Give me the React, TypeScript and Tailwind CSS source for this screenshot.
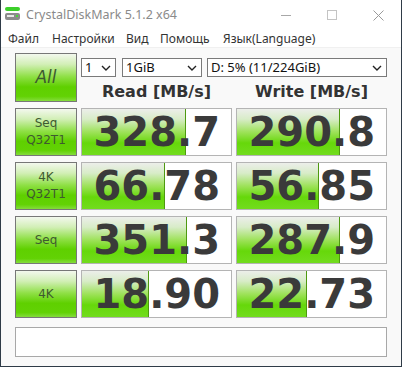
const rows = [
  { l1: "Seq", l2: "Q32T1", r: "328.7", rw: 104, w: "290.8", ww: 103 },
  { l1: "4K", l2: "Q32T1", r: "66.78", rw: 83, w: "56.85", ww: 82 },
  { l1: "Seq", l2: "", r: "351.3", rw: 105, w: "287.9", ww: 103 },
  { l1: "4K", l2: "", r: "18.90", rw: 67, w: "22.73", ww: 70 },
];

const labelBg =
  "bg-[linear-gradient(to_bottom,#f3f8ee_0%,#d2efb6_22%,#8fe046_48%,#5fd000_70%,#62d204_90%,#84dc3c_100%)]";

function Chevron() {
  return (
    <svg width="10" height="6" viewBox="0 0 10 6" className="shrink-0">
      <path d="M1 1l4 4 4-4" fill="none" stroke="#222" strokeWidth="1.4" />
    </svg>
  );
}

function Combo({ text, w }: { text: string; w: string }) {
  return (
    <div className={`${w} h-[19px] bg-white border border-[#7a7a7a] flex items-center justify-between pl-[3px] pr-[4px] text-[13px] text-[#111] leading-none`}>
      <span>{text}</span>
      <Chevron />
    </div>
  );
}

function Value({ v, fill }: { v: string; fill: number }) {
  return (
    <div className="relative w-[151px] h-[48px] bg-white border border-[#b4b4b4] flex items-center justify-end pr-[11px]">
      <div
        className="absolute left-0 top-0 bottom-0 border-r border-[#4e9a10] bg-[linear-gradient(to_bottom,#eceeea_0%,#d8ecc8_22%,#9ee25a_50%,#66d80a_74%,#72dc1e_100%)]"
        style={{ width: fill }}
      />
      <span className="relative font-['DejaVu_Sans',sans-serif] font-bold text-[40px] leading-none text-[#3a3a3a]">
        {v}
      </span>
    </div>
  );
}

function Label({ l1, l2 }: { l1: string; l2: string }) {
  return (
    <div className={`w-[62px] h-[48px] border border-[#777] ${labelBg} flex flex-col items-center justify-center text-[12px] leading-[17px] text-[#3e5a30] font-['DejaVu_Sans',sans-serif]`}>
      <span>{l1}</span>
      {l2 && <span>{l2}</span>}
    </div>
  );
}

export default function App() {
  return (
    <div className="w-[402px] h-[367px] flex flex-col bg-[#f9f9f9] border-x border-b border-[#2f3b47] font-['Noto_Sans',sans-serif] overflow-hidden">
      <div className="h-[30px] bg-white flex items-center relative">
        <svg width="17" height="16" viewBox="0 0 17 16" className="ml-[3px] mt-[-2px]">
          <rect x="1" y="1" width="15" height="4" rx="2" fill="#3ccf2a" />
          <rect x="1" y="7" width="15" height="7" rx="2" fill="#8c8c8c" />
          <rect x="3" y="9" width="7" height="2" fill="#e8e8e8" />
          <rect x="12" y="9" width="2" height="2" fill="#4ad43a" />
        </svg>
        <span className="ml-[5px] text-[12.5px] text-[#8a8a8a]">CrystalDiskMark 5.1.2 x64</span>
        <div className="ml-auto flex items-center h-full">
          <div className="w-[46px] h-full flex items-center justify-center">
            <div className="w-[10px] h-px bg-[#a8a8a8]" />
          </div>
          <div className="w-[46px] h-full flex items-center justify-center">
            <div className="w-[10px] h-[10px] border border-[#c4c4c4]" />
          </div>
          <div className="w-[46px] h-full flex items-center justify-center">
            <svg width="11" height="11" viewBox="0 0 11 11">
              <path d="M0.5 0.5l10 10M10.5 0.5l-10 10" stroke="#9a9a9a" strokeWidth="1" />
            </svg>
          </div>
        </div>
      </div>
      <div className="h-[18px] bg-white flex items-center text-[12px] text-[#333] leading-none pl-[7px] border-b border-[#f0f0f0]">
        <span className="w-[44px]">Файл</span>
        <span className="w-[74px]">Настройки</span>
        <span className="w-[34px]">Вид</span>
        <span className="w-[63px]">Помощь</span>
        <span>Язык(Language)</span>
      </div>
      <div className="flex flex-col pl-[14px] pt-[5px]">
        <div className="flex gap-[4px]">
          <div className={`w-[62px] h-[49px] border border-[#777] ${labelBg} flex items-center justify-center text-[17px] text-[#3e5a30] font-['DejaVu_Sans',sans-serif] italic`}>
            All
          </div>
          <div className="flex flex-col">
            <div className="flex mt-[5px]">
              <Combo text="1" w="w-[35px]" />
              <div className="w-[6px]" />
              <Combo text="1GiB" w="w-[80px]" />
              <div className="w-[5px]" />
              <Combo text="D: 5% (11/224GiB)" w="w-[180px]" />
            </div>
            <div className="flex gap-[4px] mt-[7px] font-['DejaVu_Sans',sans-serif] font-bold text-[16px] leading-none text-[#333]">
              <div className="w-[151px] text-center">Read [MB/s]</div>
              <div className="w-[151px] text-center">Write [MB/s]</div>
            </div>
          </div>
        </div>
        <div className="flex flex-col gap-[6px] mt-[6px]">
          {rows.map((r, i) => (
            <div key={i} className="flex gap-[4px]">
              <Label l1={r.l1} l2={r.l2} />
              <Value v={r.r} fill={r.rw} />
              <Value v={r.w} fill={r.ww} />
            </div>
          ))}
        </div>
        <div className="mt-[9px] w-[372px] h-[30px] bg-white border border-[#a8a8a8]" />
      </div>
    </div>
  );
}
